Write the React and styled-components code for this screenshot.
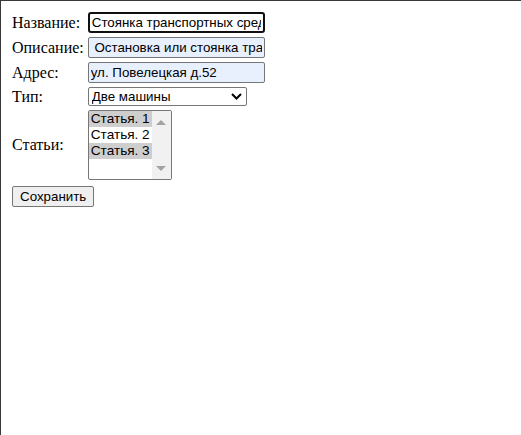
import React from "react";
import styled, { createGlobalStyle } from "styled-components";

const Global = createGlobalStyle`
  html {
    background: #ffffff;
    border-top: 1px solid #3a3a3a;
    border-left: 1px solid #3a3a3a;
    min-height: 100%;
    box-sizing: border-box;
  }
  body {
    margin: 8px;
    font-family: "Liberation Serif", "Times New Roman", serif;
    font-size: 16px;
    color: #000;
  }
`;

const FormTable = styled.table`
  border-spacing: 2px;
`;

const Label = styled.td`
  padding: 1px;
  vertical-align: middle;
  white-space: nowrap;
`;

const Cell = styled.td`
  padding: 1px;
  vertical-align: middle;
`;

const TextInput = styled.input`
  font-family: "Liberation Sans", Arial, sans-serif;
  font-size: 13.3333px;
  width: 177px;
  height: 21px;
  box-sizing: border-box;
  padding: 1px 2px;
  margin: 0;
  color: #000;
  background: ${(p) => (p.$filled ? "#e8f0fe" : "#ffffff")};
  border: ${(p) => (p.$focused ? "2px solid #101010" : "1px solid #767676")};
  border-radius: ${(p) => (p.$focused ? "3px" : "2px")};
  outline: none;
  display: block;
`;

const SelectWrap = styled.div`
  position: relative;
  width: 159px;
`;

const Select = styled.select`
  appearance: none;
  -webkit-appearance: none;
  font-family: "Liberation Sans", Arial, sans-serif;
  font-size: 13.3333px;
  width: 159px;
  height: 19px;
  box-sizing: border-box;
  margin: 0;
  padding: 0 20px 0 3px;
  color: #000;
  background: #fff;
  border: 1px solid #767676;
  border-radius: 2px;
  display: block;
`;

const Chevron = styled.svg`
  position: absolute;
  right: 5px;
  top: 6px;
  width: 11px;
  height: 7px;
  pointer-events: none;
`;

const ListBox = styled.div`
  width: 84px;
  height: 70px;
  box-sizing: border-box;
  border: 1px solid #767676;
  border-radius: 2px;
  display: grid;
  grid-template-columns: 1fr 19px;
  overflow: hidden;
  background: #fff;
`;

const Options = styled.div`
  display: flex;
  flex-direction: column;
  align-items: flex-start;
`;

const Option = styled.div`
  font-family: "Liberation Sans", Arial, sans-serif;
  font-size: 13.6px;
  line-height: 16px;
  height: 16px;
  padding: 0 1px 0 2px;
  width: 100%;
  box-sizing: border-box;
  white-space: nowrap;
  color: #000;
  background: ${(p) => (p.$selected ? "#cecece" : "transparent")};
`;

const Scrollbar = styled.div`
  background: #f1f1f1;
  display: flex;
  flex-direction: column;
  justify-content: space-between;
  align-items: center;
  padding: 9px 0 8px 0;
`;

const Arrow = styled.div`
  width: 0;
  height: 0;
  border-left: 5px solid transparent;
  border-right: 5px solid transparent;
  ${(p) =>
    p.$down
      ? "border-top: 5px solid #a3a3a3;"
      : "border-bottom: 5px solid #a3a3a3;"}
`;

const Button = styled.button`
  font-family: "Liberation Sans", Arial, sans-serif;
  font-size: 13.3333px;
  height: 21px;
  padding: 1px 7px;
  margin: 2px 0 0 0;
  background: #efefef;
  border: 1px solid #767676;
  border-radius: 2px;
  color: #000;
  display: block;
`;

const articles = [
  { id: 1, title: "Статья. 1", selected: true },
  { id: 2, title: "Статья. 2", selected: false },
  { id: 3, title: "Статья. 3", selected: true },
];

export default function App() {
  return (
    <>
      <Global />
      <form onSubmit={(e) => e.preventDefault()}>
        <FormTable>
          <tbody>
            <tr>
              <Label>Название:</Label>
              <Cell>
                <TextInput $focused defaultValue="Стоянка транспортных средств" />
              </Cell>
            </tr>
            <tr>
              <Label>Описание:</Label>
              <Cell>
                <TextInput $filled defaultValue=" Остановка или стоянка транспортных средств" />
              </Cell>
            </tr>
            <tr>
              <Label>Адрес:</Label>
              <Cell>
                <TextInput $filled defaultValue="ул. Повелецкая д.52" />
              </Cell>
            </tr>
            <tr>
              <Label>Тип:</Label>
              <Cell>
                <SelectWrap>
                  <Select defaultValue="2">
                    <option value="1">Одна машина</option>
                    <option value="2">Две машины</option>
                  </Select>
                  <Chevron viewBox="0 0 11 7">
                    <path d="M1 1 L5.5 5.5 L10 1" fill="none" stroke="#000" strokeWidth="2" />
                  </Chevron>
                </SelectWrap>
              </Cell>
            </tr>
            <tr>
              <Label>Статьи:</Label>
              <Cell>
                <ListBox role="listbox" aria-multiselectable="true">
                  <Options>
                    {articles.map((a) => (
                      <Option key={a.id} role="option" aria-selected={a.selected} $selected={a.selected}>
                        {a.title}
                      </Option>
                    ))}
                  </Options>
                  <Scrollbar>
                    <Arrow />
                    <Arrow $down />
                  </Scrollbar>
                </ListBox>
              </Cell>
            </tr>
            <tr>
              <Cell colSpan={2}>
                <Button type="submit">Сохранить</Button>
              </Cell>
            </tr>
          </tbody>
        </FormTable>
      </form>
    </>
  );
}
